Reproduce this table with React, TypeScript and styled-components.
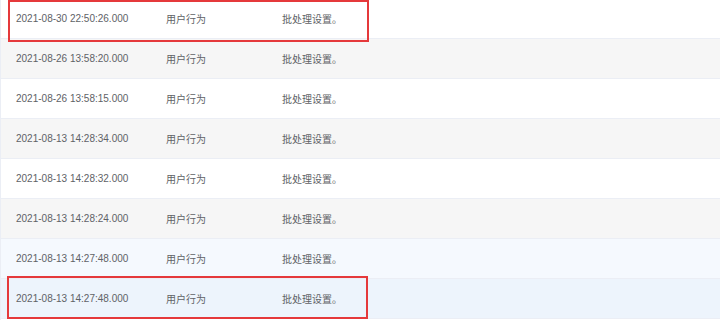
import React from 'react';
import styled, { createGlobalStyle } from 'styled-components';

const GlobalStyle = createGlobalStyle`
  html, body {
    margin: 0;
    padding: 0;
    background: #ffffff;
  }
  body {
    width: 720px;
    height: 320px;
    overflow: hidden;
    font-family: "Liberation Sans", "Noto Sans CJK SC", sans-serif;
  }
`;

type Tone = 'plain' | 'striped' | 'soft' | 'hover';

const rowColors: Record<Tone, string> = {
  plain: '#ffffff',
  striped: '#f6f6f6',
  soft: '#f5f9fe',
  hover: '#edf4fc',
};

const logs: { time: string; tone: Tone }[] = [
  { time: '2021-08-30 22:50:26.000', tone: 'plain' },
  { time: '2021-08-26 13:58:20.000', tone: 'striped' },
  { time: '2021-08-26 13:58:15.000', tone: 'plain' },
  { time: '2021-08-13 14:28:34.000', tone: 'striped' },
  { time: '2021-08-13 14:28:32.000', tone: 'plain' },
  { time: '2021-08-13 14:28:24.000', tone: 'striped' },
  { time: '2021-08-13 14:27:48.000', tone: 'soft' },
  { time: '2021-08-13 14:27:48.000', tone: 'hover' },
];

function App() {
  return (
    <>
      <GlobalStyle />
      <Table>
        {logs.map((log, i) => (
          <Row key={i} $tone={log.tone}>
            <Cell>{log.time}</Cell>
            <Cell>用户行为</Cell>
            <Cell>批处理设置。</Cell>
          </Row>
        ))}
        <Mark $top={0} $left={7} $width={361} $height={42} />
        <Mark $top={276} $left={6} $width={361} $height={43} />
      </Table>
    </>
  );
}

const Table = styled.div`
  position: relative;
  width: 720px;
  height: 320px;
  overflow: hidden;
  border-left: 1px solid #ebeef5;
  box-sizing: border-box;
`;

const Row = styled.div<{ $tone: Tone }>`
  display: grid;
  grid-template-columns: 150px 116px 1fr;
  align-items: center;
  height: 39px;
  padding-left: 15px;
  border-bottom: 1px solid #ebeef5;
  background-color: ${({ $tone }) => rowColors[$tone]};
  &:first-child {
    margin-top: -1px;
  }
`;

const Cell = styled.div`
  font-size: 10px;
  color: #606266;
  white-space: nowrap;
`;

const Mark = styled.div<{ $top: number; $left: number; $width: number; $height: number }>`
  position: absolute;
  top: ${({ $top }) => $top}px;
  left: ${({ $left }) => $left}px;
  width: ${({ $width }) => $width}px;
  height: ${({ $height }) => $height}px;
  box-sizing: border-box;
  border: 2px solid #e5393b;
  pointer-events: none;
`;

export default App;
